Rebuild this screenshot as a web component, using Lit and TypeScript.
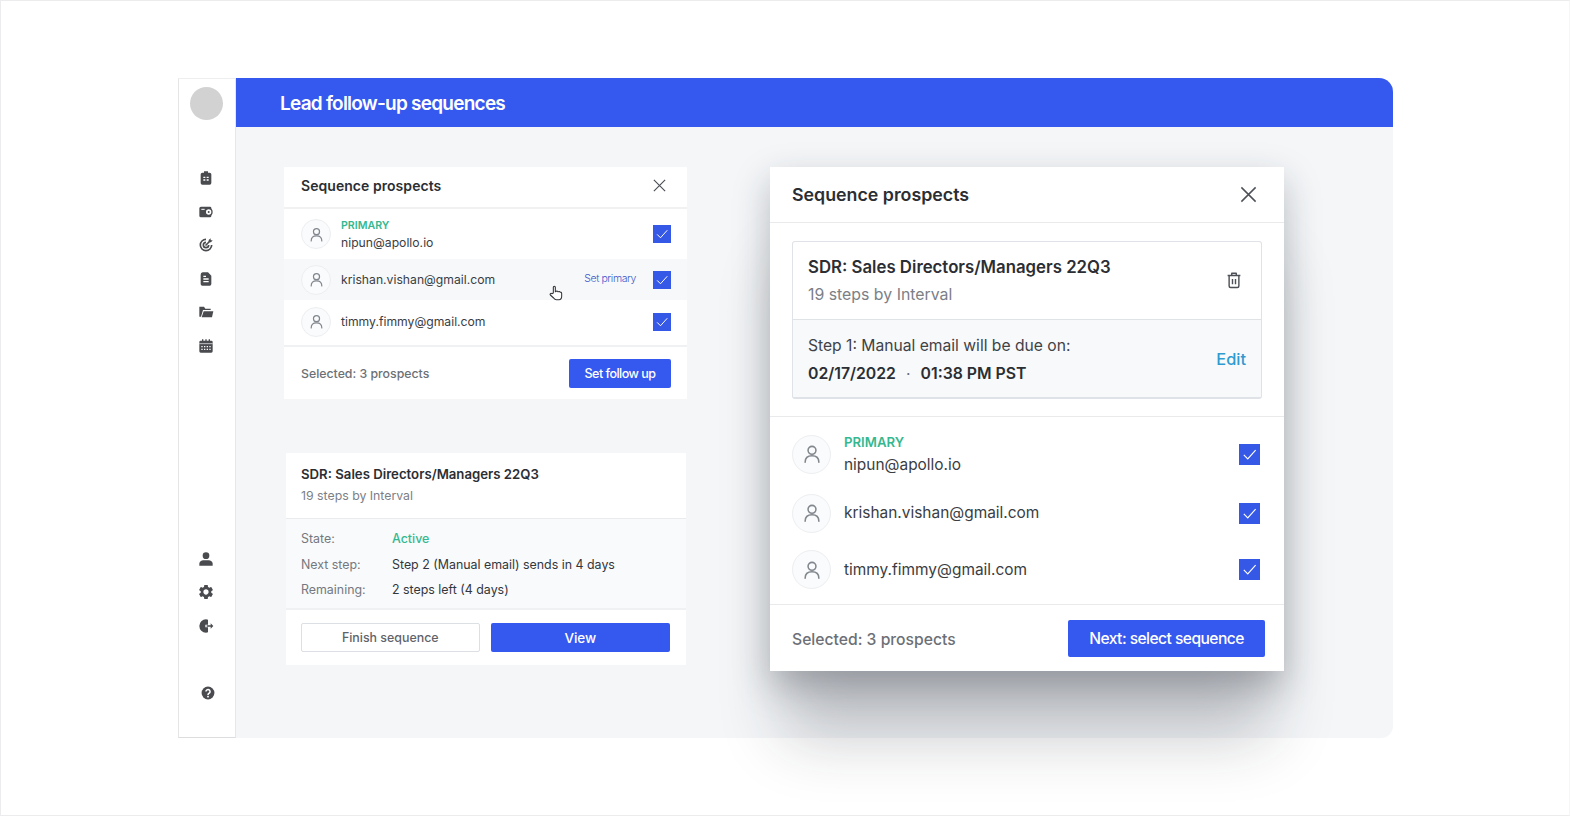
import { LitElement, html, css, svg } from "lit";
import { customElement } from "lit/decorators.js";

const ic = (body: unknown, w = 16) => html`<svg class="ic" width=${w} height=${w} viewBox="0 0 24 24">${body}</svg>`;

const ICONS_TOP = [
  svg`<path fill="#4a4b4f" d="M9 2h6v2h2.500A2.500 2.500 0 0 1 20 6.500v13a2.500 2.500 0 0 1-2.500 2.500h-11A2.500 2.500 0 0 1 4 19.500v-13A2.500 2.500 0 0 1 6.500 4H9z"/><path fill="#fff" d="M8 10h3v2H8zM13 10h3v2h-3zM8 14h3v2H8zM13 14h3v2h-3z"/>`,
  svg`<path fill="#4a4b4f" d="M4.500 4H18a2 2 0 0 1 2 2v1.500h-5a4.500 4.500 0 0 0 0 9h5V18a2 2 0 0 1-2 2H4.500A2.500 2.500 0 0 1 2 17.500v-11A2.500 2.500 0 0 1 4.500 4z"/><circle cx="16" cy="12" r="5" fill="none" stroke="#4a4b4f" stroke-width="2"/><circle cx="16" cy="12" r="1.500" fill="#4a4b4f"/><path stroke="#fff" stroke-width="1.500" d="M5 8h5"/>`,
  svg`<path fill="none" stroke="#4a4b4f" stroke-width="2.500" d="M12 3.500a8.500 8.500 0 1 0 8.500 8.500"/><path fill="none" stroke="#4a4b4f" stroke-width="2.500" d="M12 8a4 4 0 1 0 4 4"/><path fill="none" stroke="#4a4b4f" stroke-width="2.500" stroke-linecap="round" d="M12 12l6-6"/><path fill="#4a4b4f" d="M16 4.500L19 2v3h3l-2.500 3H16z"/>`,
  svg`<path fill="#4a4b4f" d="M7 2h8l5 5v12.500a2.500 2.500 0 0 1-2.500 2.500h-11A2.500 2.500 0 0 1 4 19.500v-14A3.500 3.500 0 0 1 7 2z"/><path fill="#fff" d="M8 11h8v2H8zM8 15h8v2H8zM8 7h4v2H8z"/>`,
  svg`<path fill="#4a4b4f" d="M2 4h7l2 3h8v2H7.500L4.500 19H2z"/><path fill="#4a4b4f" d="M8.500 11H23l-2 9H5.500z"/>`,
  svg`<path fill="#4a4b4f" d="M2 6a2 2 0 0 1 2-2h2V2h2v2h3V2h2v2h3V2h2v2h2a2 2 0 0 1 2 2v14a2 2 0 0 1-2 2H4a2 2 0 0 1-2-2z"/><path fill="#fff" d="M5 12h2v2H5zM9 12h2v2H9zM13 12h2v2h-2zM17 12h2v2h-2zM5 16h2v2H5zM9 16h2v2H9zM13 16h2v2h-2zM17 16h2v2h-2z"/><path stroke="#fff" d="M2 8.500h20"/>`,
];

const ICONS_BOTTOM = [
  svg`<circle cx="12" cy="7" r="5" fill="#4a4b4f"/><path fill="#4a4b4f" d="M2 22v-3c0-3 3-5 6-5h8c3 0 6 2 6 5v3z"/>`,
  svg`<path fill="#4a4b4f" transform="translate(-1.200 -1.200) scale(1.100)" d="M19.140 12.940c.04-.3.060-.610.060-.940 0-.320-.020-.640-.070-.940l2.030-1.580c.180-.140.230-.410.120-.610l-1.920-3.320c-.120-.220-.370-.290-.590-.220l-2.390.960c-.5-.380-1.030-.7-1.620-.940l-.360-2.540c-.040-.240-.240-.410-.480-.410h-3.840c-.240 0-.430.170-.470.410l-.360 2.540c-.590.240-1.130.570-1.620.940l-2.390-.960c-.220-.080-.470 0-.590.220L2.740 8.870c-.120.210-.080.470.120.610l2.030 1.580c-.050.3-.090.630-.090.940s.020.640.070.940l-2.030 1.580c-.180.140-.230.410-.120.610l1.920 3.320c.120.220.370.290.590.220l2.390-.960c.5.380 1.030.7 1.620.94l.36 2.540c.05.240.24.410.48.41h3.840c.24 0 .44-.17.47-.41l.36-2.540c.59-.24 1.130-.56 1.620-.94l2.39.96c.22.08.47 0 .59-.22l1.920-3.320c.12-.22.07-.47-.12-.61l-2.010-1.580zM12 15.600c-1.980 0-3.600-1.620-3.600-3.600s1.620-3.600 3.600-3.600 3.600 1.620 3.600 3.600-1.620 3.600-3.600 3.600z"/>`,
  svg`<path fill="#4a4b4f" d="M12 2a10 10 0 1 0 0 20c1 0 2-.2 3-.500V14h-4v-4h4V2.500A10 10 0 0 0 12 2z"/><path fill="#4a4b4f" d="M13 11h6V8l4 4-4 4v-3h-6z"/>`,
];

const HELP = svg`<circle cx="12" cy="12" r="11" fill="#4a4b4f"/><path fill="none" stroke="#fff" stroke-width="2.600" d="M8.500 9.500a3.500 3.500 0 1 1 5.500 2.900c-1.300.9-2 1.500-2 3"/><rect x="10.600" y="16.800" width="2.800" height="2.800" fill="#fff"/>`;

const PERSON = svg`<circle cx="12" cy="8" r="4.300" fill="none" stroke="#82878e" stroke-width="1.700"/><path fill="none" stroke="#82878e" stroke-width="1.700" stroke-linecap="round" d="M4.500 21c0-4.500 3-7 7.500-7s7.500 2.500 7.500 7"/>`;

const X = svg`<path fill="none" stroke="#4d5157" stroke-width="1.900" d="M3 3l18 18M21 3L3 21"/>`;
const CHECK = svg`<path fill="none" stroke="#fff" stroke-width="1.300" d="M5.500 12.500l4.500 4.500 9-10"/>`;
const TRASH = svg`<path fill="none" stroke="#4d5157" stroke-width="1.900" stroke-linejoin="round" d="M3.500 6h17M9 6V3h6v3M5.500 6v14a2 2 0 0 0 2 2h9a2 2 0 0 0 2-2V6M10 10.500v7M14 10.500v7"/>`;
const HAND = svg`<path fill="#fff" stroke="#33363a" stroke-width="1.600" stroke-linejoin="round" d="M8 12V3.500a1.500 1.500 0 0 1 3 0V10l1-.2a1.400 1.400 0 0 1 2.500.2l1.200.1a1.300 1.300 0 0 1 2.200.5l.8.1c1 0 1.800.8 1.800 2V17c0 3-2 5-4 5h-4c-2 0-3-1-4-2.500L3.500 15a1.500 1.500 0 0 1 2.300-2z"/>`;

const EMAILS = ["nipun@apollo.io", "krishan.vishan@gmail.com", "timmy.fimmy@gmail.com"];

@customElement("app-root")
export class AppRoot extends LitElement {
  static styles = css`
    :host {
      display: block;
      box-sizing: border-box;
      height: 816px;
      padding: 77px 0 0 177px;
      border: 1px solid #ececee;
      border-right-color: #f6f6f6;
      background: #fff;
      font-family: Inter, "Liberation Sans", sans-serif;
      color: #2b2e33;
      overflow: hidden;
    }
    .ic { display: block; flex: none; }
    .frame { display: flex; width: 1215px; height: 660px; }
    .side {
      flex: none;
      box-sizing: border-box;
      width: 58px;
      border-left: 1px solid #e4e5e6;
      border-right: 1px solid #e6e7e9;
      border-top: 1px solid #eeeeef;
      border-bottom: 1px solid #dcdddf;
      background: #fff;
      display: flex;
      flex-direction: column;
      align-items: center;
      padding: 8px 2px 0 0;
    }
    .ava { width: 33px; height: 33px; border-radius: 50%; background: #d2d2d2; margin-bottom: 50px; flex: none; }
    .nav { display: flex; flex-direction: column; gap: 17.600px; }
    .spacer { flex: 1; }
    .nav.low { margin-bottom: 52px; }
    .help { margin: 0 0 37px 3px; }
    .main {
      flex: 1;
      min-width: 0;
      background: #f4f6f8;
      border-radius: 14px 14px 12px 0;
      border-top-left-radius: 0;
      display: flex;
      flex-direction: column;
    }
    .bar {
      flex: none;
      height: 49px;
      background: #3558ef;
      border-top-right-radius: 14px;
      color: #fff;
      font-size: 19px;
      font-weight: 600;
      letter-spacing: -0.760px;
      line-height: 52px;
      padding-left: 44px;
    }
    .content { display: flex; align-items: flex-start; padding: 40px 0 0 48px; }
    .left { flex: none; width: 403px; display: flex; flex-direction: column; }
    .card { background: #fff; }
    .head {
      display: flex;
      align-items: center;
      justify-content: space-between;
      box-sizing: border-box;
      height: 42px;
      padding: 0 20px 3px 17px;
      border-bottom: 2px solid #eff1f3;
      font-size: 14px;
      font-weight: 600;
      letter-spacing: 0.050px;
    }
    .row {
      display: flex;
      align-items: center;
      padding: 0 16px 0 17px;
      position: relative;
    }
    .r1 { height: 50px; }
    .r2 { height: 41px; background: #f6f8fa; }
    .r3 { height: 45px; padding-bottom: 2px; box-sizing: border-box; }
    .circle {
      flex: none;
      box-sizing: border-box;
      width: 30px;
      height: 30px;
      border-radius: 50%;
      border: 1px solid #eceef0;
      background: #fafbfc;
      display: flex;
      align-items: center;
      justify-content: center;
      margin-right: 10px;
    }
    .who { flex: 1; min-width: 0; font-size: 12.200px; line-height: 17px; color: #3a3d42; }
    .prim { font-size: 10.600px; font-weight: 600; color: #35b88f; line-height: 15px; margin-bottom: 1px; }
    .setp { font-size: 10.500px; color: #4056c8; letter-spacing: -0.400px; margin: 0 17px 3px 0; font-weight: 300; }
    .box {
      flex: none;
      width: 18px;
      height: 18px;
      background: #3558e6;
      display: flex;
      align-items: center;
      justify-content: center;
    }
    .cursor { position: absolute; left: 264px; top: 26px; }
    .foot {
      display: flex;
      align-items: center;
      justify-content: space-between;
      height: 52px;
      padding: 0 16px 0 17px;
      border-top: 2px solid #eff1f3;
      font-size: 12.300px;
      font-weight: 500;
      color: #6c7076;
    }
    .btn {
      background: #3558ef;
      color: #fff;
      border-radius: 2px;
      display: flex;
      align-items: center;
      justify-content: center;
      font-weight: 500;
      letter-spacing: -0.400px;
    }
    .foot .btn { width: 102px; height: 29px; font-size: 12.500px; letter-spacing: -0.500px; }
    .seq { margin: 54px 0 0 2px; width: 400px; }
    .seq-top { height: 66px; box-sizing: border-box; padding: 11px 15px 0; border-bottom: 1px solid #e9ebee; }
    .t { font-size: 13.200px; font-weight: 600; line-height: 20px; }
    .s { font-size: 12.300px; line-height: 18px; color: #7b8087; margin-top: 3px; }
    .info {
      background: #f8fafb;
      height: 89px;
      box-sizing: border-box;
      padding: 7px 15px 0;
      display: grid;
      grid-template-columns: 91px 1fr;
      grid-auto-rows: 25.600px;
      align-items: center;
      font-size: 12.400px;
      color: #33363b;
    }
    .lab { color: #74787f; }
    .act { color: #35b88f; font-weight: 500; }
    .acts {
      display: flex;
      gap: 11px;
      height: 57px;
      box-sizing: border-box;
      padding: 13px 16px 0 15px;
      border-top: 2px solid #eff1f3;
    }
    .ghost {
      box-sizing: border-box;
      width: 179px;
      height: 29px;
      border: 1px solid #dcdfe3;
      border-radius: 2px;
      background: #fff;
      color: #5f6369;
      font-size: 12.400px;
      font-weight: 500;
      display: flex;
      align-items: center;
      justify-content: center;
    }
    .acts .btn { width: 180px; height: 29px; font-size: 13.500px; letter-spacing: -0.100px; }
    .modal {
      flex: none;
      margin-left: 83px;
      width: 514px;
      background: #fff;
      box-shadow: 0 80px 60px -14px rgba(30, 35, 45, 0.24), 0 14px 34px rgba(30, 35, 45, 0.28);
      position: relative;
    }
    .m-head {
      display: flex;
      align-items: center;
      justify-content: space-between;
      height: 55px;
      padding: 0 26px 0 22px;
      border-bottom: 1px solid #e8eaec;
      font-size: 17.800px;
      font-weight: 600;
    }
    .m-sec { padding: 18px 22px 17px 22px; border-bottom: 1px solid #e8eaec; }
    .panel { border: 1px solid #dfe2e6; border-bottom-width: 2px; border-radius: 3px; overflow: hidden; }
    .p-top {
      display: flex;
      align-items: center;
      justify-content: space-between;
      height: 77px;
      padding: 0 18px 0 15px;
      border-bottom: 1px solid #e0e3e6;
    }
    .p-top > .ic { margin-bottom: 2px; }
    .p-t { font-size: 16.800px; font-weight: 600; line-height: 24px; }
    .p-s { font-size: 15.850px; line-height: 22px; color: #7b8087; margin-top: 5px; }
    .p-bot {
      display: flex;
      align-items: center;
      justify-content: space-between;
      height: 77px;
      padding: 0 15px;
      background: #f7f9fa;
    }
    .p-txt { padding-top: 3px; }
    .p-l { font-size: 15.650px; line-height: 22px; color: #3f4247; }
    .p-d { display: flex; gap: 10px; font-size: 15.800px; font-weight: 600; line-height: 22px; margin-top: 6px; }
    .dot { font-weight: 400; color: #6c7076; }
    .edit { font-size: 16.400px; font-weight: 500; color: #2f9bd0; }
    .m-list { padding: 6px 22px 6px 22px; border-bottom: 1px solid #e8eaec; }
    .m-row { display: flex; align-items: center; height: 56.500px; }
    .m-row:first-child { height: 62px; }
    .m-row .circle { width: 39px; height: 39px; margin-right: 13px; }
    .m-row .who { font-size: 15.450px; line-height: 22px; color: #3a3d42; }
    .m-row .prim { font-size: 13.200px; line-height: 18px; margin-bottom: 3px; }
    .m-row .box { width: 21px; height: 21px; margin-right: 2px; }
    .m-foot {
      display: flex;
      align-items: center;
      justify-content: space-between;
      height: 65.500px;
      padding: 0 19px 0 22px;
      font-size: 15.700px;
      font-weight: 500;
      color: #6c7076;
    }
    .m-sel { margin-top: 3px; }
    .m-foot .btn { width: 197px; height: 37px; font-size: 15.600px; letter-spacing: -0.550px; margin-top: 1px; }
  `;

  private personRow(email: string, i: number) {
    return html`<div class="row ${["r1", "r2", "r3"][i]}">
      <div class="circle">${ic(PERSON, 17)}</div>
      <div class="who">${i === 0 ? html`<div class="prim">PRIMARY</div>` : ""}${email}</div>
      ${i === 1 ? html`<span class="setp">Set primary</span>` : ""}
      <div class="box">${ic(CHECK, 18)}</div>
      ${i === 1 ? html`<div class="cursor">${ic(HAND, 16)}</div>` : ""}
    </div>`;
  }

  render() {
    return html`<div class="frame">
      <aside class="side">
        <div class="ava"></div>
        <div class="nav">${ICONS_TOP.map((b) => ic(b))}</div>
        <div class="spacer"></div>
        <div class="nav low">${ICONS_BOTTOM.map((b) => ic(b))}</div>
        <div class="help">${ic(HELP, 14)}</div>
      </aside>
      <div class="main">
        <div class="bar">Lead follow-up sequences</div>
        <div class="content">
          <div class="left">
            <section class="card">
              <div class="head">Sequence prospects ${ic(X, 15)}</div>
              ${EMAILS.map((e, i) => this.personRow(e, i))}
              <div class="foot">Selected: 3 prospects <div class="btn">Set follow up</div></div>
            </section>
            <section class="card seq">
              <div class="seq-top">
                <div class="t">SDR: Sales Directors/Managers 22Q3</div>
                <div class="s">19 steps by Interval</div>
              </div>
              <div class="info">
                <span class="lab">State:</span><span class="act">Active</span>
                <span class="lab">Next step:</span><span>Step 2 (Manual email) sends in 4 days</span>
                <span class="lab">Remaining:</span><span>2 steps left (4 days)</span>
              </div>
              <div class="acts">
                <div class="ghost">Finish sequence</div>
                <div class="btn">View</div>
              </div>
            </section>
          </div>
          <section class="modal">
            <div class="m-head">Sequence prospects ${ic(X, 19)}</div>
            <div class="m-sec">
              <div class="panel">
                <div class="p-top">
                  <div>
                    <div class="p-t">SDR: Sales Directors/Managers 22Q3</div>
                    <div class="p-s">19 steps by Interval</div>
                  </div>
                  ${ic(TRASH, 18)}
                </div>
                <div class="p-bot">
                  <div class="p-txt">
                    <div class="p-l">Step 1: Manual email will be due on:</div>
                    <div class="p-d"><span>02/17/2022</span><span class="dot">·</span><span>01:38 PM PST</span></div>
                  </div>
                  <div class="edit">Edit</div>
                </div>
              </div>
            </div>
            <div class="m-list">
              ${EMAILS.map(
                (e, i) => html`<div class="m-row">
                  <div class="circle">${ic(PERSON, 22)}</div>
                  <div class="who">${i === 0 ? html`<div class="prim">PRIMARY</div>` : ""}${e}</div>
                  <div class="box">${ic(CHECK, 21)}</div>
                </div>`
              )}
            </div>
            <div class="m-foot"><span class="m-sel">Selected: 3 prospects</span><div class="btn">Next: select sequence</div></div>
          </section>
        </div>
      </div>
    </div>`;
  }
}
